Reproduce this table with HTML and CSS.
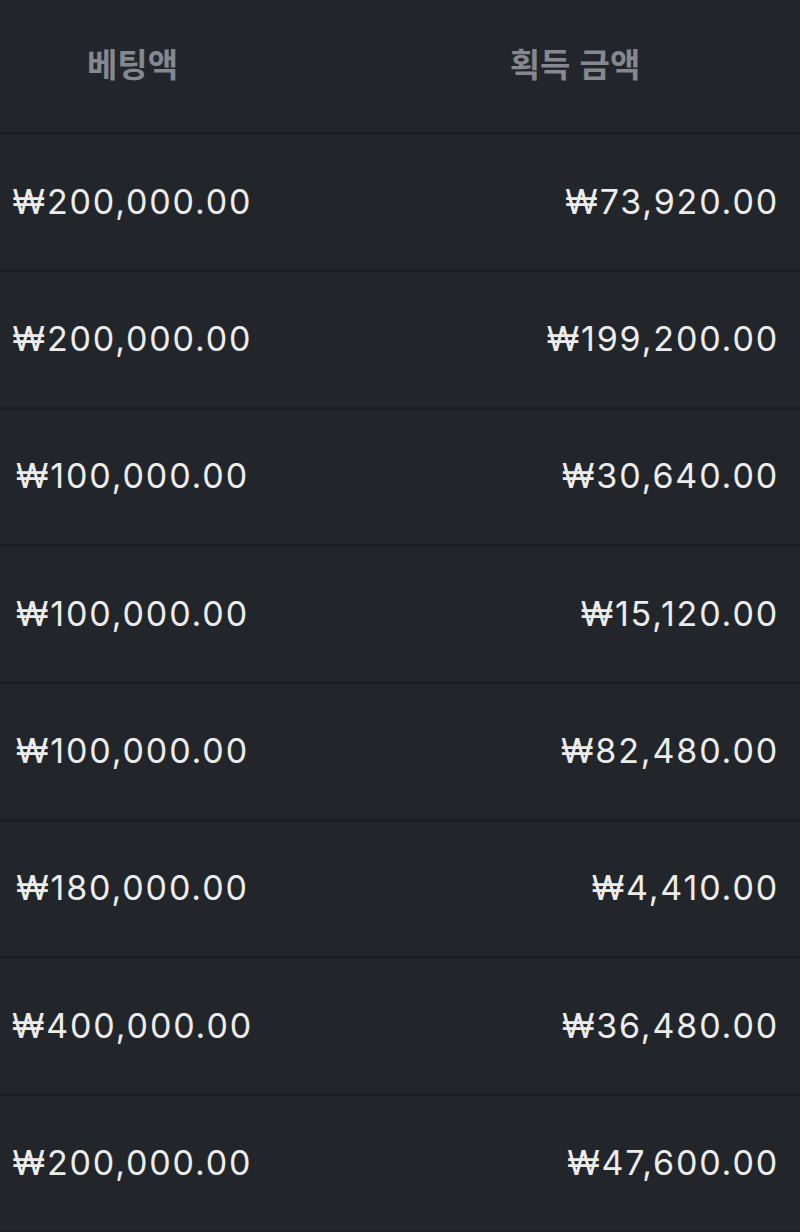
FILE: index.html
```html
<!DOCTYPE html>
<html lang="ko">
<head>
<meta charset="utf-8">
<link rel="stylesheet" href="styles.css">
</head>
<body>
<div class="table">
  <div class="row head">
    <div class="cell bet">베팅액</div>
    <div class="cell win">획득 금액</div>
  </div>
  <div class="row"><div class="cell bet">₩200,000.00</div><div class="cell win">₩73,920.00</div></div>
  <div class="row"><div class="cell bet">₩200,000.00</div><div class="cell win">₩199,200.00</div></div>
  <div class="row"><div class="cell bet">₩100,000.00</div><div class="cell win">₩30,640.00</div></div>
  <div class="row"><div class="cell bet">₩100,000.00</div><div class="cell win">₩15,120.00</div></div>
  <div class="row"><div class="cell bet">₩100,000.00</div><div class="cell win">₩82,480.00</div></div>
  <div class="row"><div class="cell bet">₩180,000.00</div><div class="cell win">₩4,410.00</div></div>
  <div class="row"><div class="cell bet">₩400,000.00</div><div class="cell win">₩36,480.00</div></div>
  <div class="row"><div class="cell bet">₩200,000.00</div><div class="cell win">₩47,600.00</div></div>
</div>
</body>
</html>
```
FILE: styles.css
```css
html, body {
  margin: 0;
  padding: 0;
  background: #22262b;
}
body {
  font-family: "Inter", "Noto Sans CJK KR", sans-serif;
  color: #ececec;
}
.table {
  display: flex;
  flex-direction: column;
}
.row {
  display: grid;
  grid-template-columns: 265px 85px 1fr;
  height: 134.33px;
  align-items: center;
  border-bottom: 3px solid #1b1e22;
}
.row.head {
  height: 132px;
}
.cell {
  font-size: 34px;
  letter-spacing: 1.85px;
  white-space: nowrap;
  font-variant-numeric: proportional-nums;
  padding-bottom: 2px;
}
.bet {
  grid-column: 1;
  text-align: center;
}
.win {
  grid-column: 3;
  text-align: right;
  padding-right: 21px;
}
.head .cell {
  font-family: "Noto Sans CJK KR", sans-serif;
  font-weight: 700;
  font-size: 33px;
  letter-spacing: 0;
  color: #85888e;
  text-align: center;
  padding-bottom: 6px;
}
.head .win {
  padding-right: 0;
}
```
